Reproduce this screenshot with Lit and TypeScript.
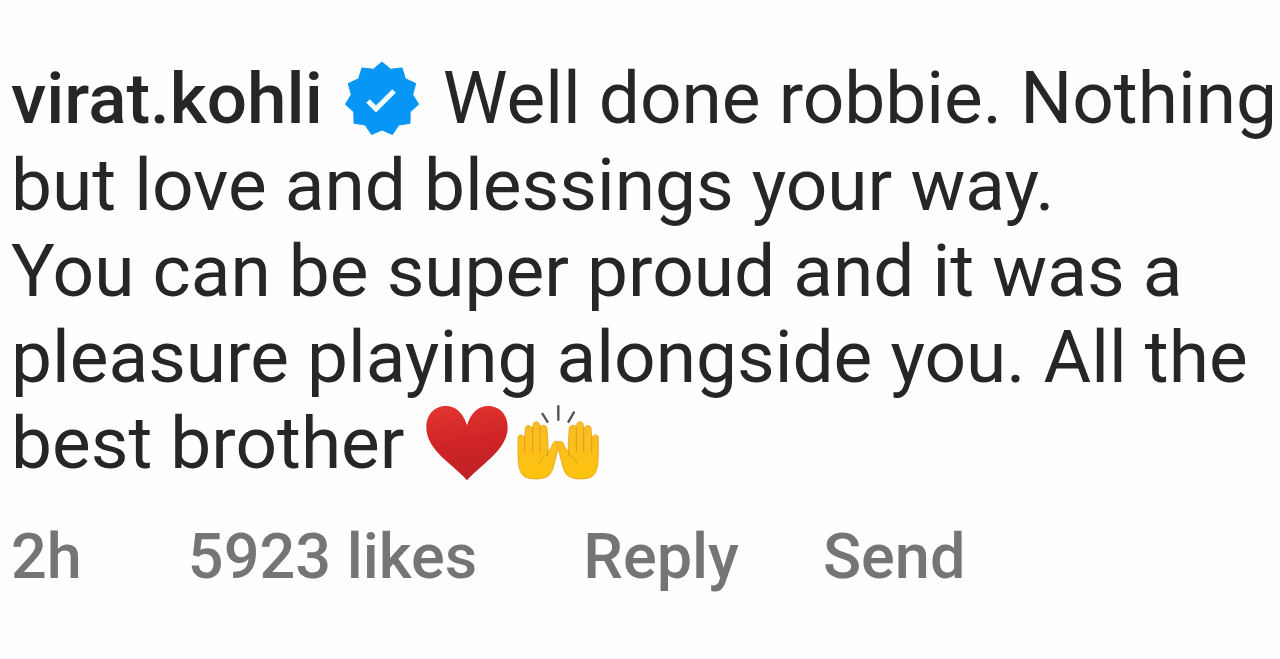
import { LitElement, html, css, svg } from "lit";
import { customElement } from "lit/decorators.js";

const BADGE_POINTS = Array.from({ length: 22 }, (_, i) => {
  const radius = i % 2 === 0 ? 37 : 31;
  const angle = (i * Math.PI) / 11;
  return `${(37 + radius * Math.sin(angle)).toFixed(1)},${(37 - radius * Math.cos(angle)).toFixed(1)}`;
}).join(" ");

const hand = svg`
  <path fill="url(#skin)" stroke="#e8a21c" stroke-width="2.5" stroke-linejoin="round"
    d="M324 143C324 134 335 132 340 139L344 141L346 115C347 105 359 104 363 111L368 113L370 102C372 93 385 93 388 102L389 110C395 104 409 104 411 114L414 160V183C418 182 423 176 427 164C431 153 442 151 446 158C448 165 443 182 437 204C432 224 429 243 418 255C404 270 354 271 340 257C326 244 325 220 324 197Z"/>
  <path fill="none" stroke="#e59a1c" stroke-width="3" stroke-linecap="round"
    d="M344 141V187M368 113V186M390 112V188M414 180L412 197M410 194C401 201 393 208 388 219"/>`;

@customElement("app-root")
export class AppRoot extends LitElement {
  static styles = css`
    :host { display: block; min-height: 100vh; background: #fefefe; color: #262626; font-family: Roboto, sans-serif; }
    .comment { padding: 55px 0 0 11px; }
    .text { margin: 0; font-size: 73px; line-height: 86px; white-space: nowrap; }
    .name { color: inherit; font-size: 71px; font-weight: 500; text-decoration: none; }
    .badge { width: 74px; height: 74px; vertical-align: -13px; margin: 0 24px 0 22px; overflow: visible; }
    .emoji { width: 84px; height: 76px; vertical-align: -13px; margin: 0 5px 0 2px; }
    .actions { display: flex; margin-top: 34px; font-size: 63px; line-height: 74px; font-weight: 500; color: #757575; gap: 106px; }
    .links { display: flex; gap: 84px; }
    .actions button { font: inherit; color: inherit; background: none; border: 0; padding: 0; cursor: pointer; }
  `;

  render() {
    return html`<article class="comment">
      <p class="text"><a class="name" href="#">virat.kohli</a><svg class="badge" viewBox="0 0 74 74" role="img" aria-label="Verified"><polygon points=${BADGE_POINTS} fill="#0896f6" stroke="#0896f6" stroke-width="1" stroke-linejoin="round"/><path d="M23 39L31 47L49 29" fill="none" stroke="#f0fbff" stroke-width="5"/></svg>Well done robbie. Nothing<br>but love and blessings your way.<br>You can be super proud and it was a<br>pleasure playing alongside you. All the<br>best brother <svg class="emoji" viewBox="44 45 252 228" role="img" aria-label="Red heart">
        <defs><linearGradient id="red" x1="0.4" y1="0" x2="0.6" y2="1"><stop offset="0" stop-color="#e03430"/><stop offset="0.5" stop-color="#cf2426"/><stop offset="1" stop-color="#bd2125"/></linearGradient></defs>
        <path fill="url(#red)" d="M170 106C158 68 137 48 106 48C71 48 48 76 48 111C48 158 82 190 118 222C142 243 160 259 170 271C180 259 198 243 222 222C258 190 292 158 292 111C292 76 269 48 234 48C203 48 182 68 170 106Z"/>
      </svg><svg class="emoji" viewBox="318 45 252 228" role="img" aria-label="Raising hands">
        <defs><linearGradient id="skin" x1="0" y1="0" x2="0" y2="1"><stop offset="0" stop-color="#f9bd27"/><stop offset="1" stop-color="#fdc30d"/></linearGradient></defs>
        <g>${hand}</g><g transform="translate(889 0) scale(-1 1)">${hand}</g>
        <path fill="none" stroke="#4b5359" stroke-width="7" d="M396 69L414 98M445 46V92M493 65L474 98"/>
      </svg></p>
      <footer class="actions"><time>2h</time><button>5923 likes</button><span class="links"><button>Reply</button><button>Send</button></span></footer>
    </article>`;
  }
}
